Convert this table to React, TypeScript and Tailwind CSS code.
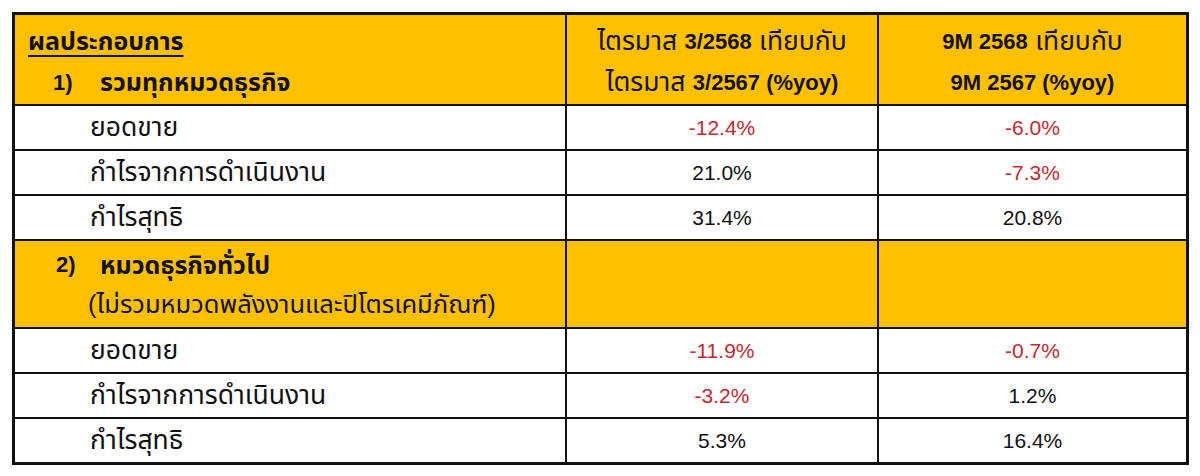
import React from 'react';

type Row = { label: string; q: string; m: string };

const isNeg = (v: string) => v.startsWith('-');

const section1: Row[] = [
  { label: 'ยอดขาย', q: '-12.4%', m: '-6.0%' },
  { label: 'กำไรจากการดำเนินงาน', q: '21.0%', m: '-7.3%' },
  { label: 'กำไรสุทธิ', q: '31.4%', m: '20.8%' },
];

const section2: Row[] = [
  { label: 'ยอดขาย', q: '-11.9%', m: '-0.7%' },
  { label: 'กำไรจากการดำเนินงาน', q: '-3.2%', m: '1.2%' },
  { label: 'กำไรสุทธิ', q: '5.3%', m: '16.4%' },
];

const font = { fontFamily: '"Liberation Sans", "Noto Sans Thai", "Noto Sans", sans-serif' };

// Thai runs are set larger than the Latin ones, as in the source sheet
const Th = ({ children }: { children: React.ReactNode }) => (
  <span className="text-[26.5px] font-normal">{children}</span>
);

const DataRows = ({ rows, last }: { rows: Row[]; last?: boolean }) => (
  <>
    {rows.map((r, i) => {
      const bottom = last && i === rows.length - 1 ? 'h-[43px]' : 'h-[45px] border-b-2';
      return (
        <React.Fragment key={r.label + i}>
          <div className={`${bottom} border-r-2 border-[#111] bg-white flex items-center pl-[75px] text-[26.5px] leading-none text-[#111]`}>
            {r.label}
          </div>
          <div
            className={`${bottom} border-r-2 border-[#111] bg-white flex items-center justify-center text-[21px] ${isNeg(r.q) ? 'text-[#c8282e]' : 'text-[#111]'}`}
          >
            {r.q}
          </div>
          <div
            className={`${bottom} border-[#111] bg-white flex items-center justify-center text-[21px] ${isNeg(r.m) ? 'text-[#c8282e]' : 'text-[#111]'}`}
          >
            {r.m}
          </div>
        </React.Fragment>
      );
    })}
  </>
);

export default function App() {
  return (
    <div className="w-[1200px] h-[476px] bg-white pt-[12px] pl-[12px]" style={font}>
      <div className="inline-grid grid-cols-[552px_312px_307px] border-[3px] border-[#111]">
        {/* header */}
        <div className="h-[91px] border-r-2 border-b-2 border-[#111] bg-[#ffc000] pt-[6px] text-[#111] font-bold">
          <div className="h-[41px] flex items-center pl-[13px] text-[25px] leading-none">
            <span className="underline underline-offset-[5px] decoration-2">ผลประกอบการ</span>
          </div>
          <div className="h-[41px] flex items-center leading-none">
            <span className="w-[85px] pl-[38px] text-[22px]">1)</span>
            <span className="text-[25px]">รวมทุกหมวดธุรกิจ</span>
          </div>
        </div>
        <div className="h-[91px] border-r-2 border-b-2 border-[#111] bg-[#ffc000] pt-[6px] text-[22px] font-bold text-[#111]">
          <div className="h-[41px] flex items-center justify-center leading-none whitespace-pre">
            <Th>ไตรมาส </Th>3/2568<Th> เทียบกับ</Th>
          </div>
          <div className="h-[41px] flex items-center justify-center leading-none whitespace-pre">
            <Th>ไตรมาส </Th>3/2567 (%yoy)
          </div>
        </div>
        <div className="h-[91px] border-b-2 border-[#111] bg-[#ffc000] pt-[6px] text-[22px] font-bold text-[#111]">
          <div className="h-[41px] flex items-center justify-center leading-none whitespace-pre">
            9M 2568<Th> เทียบกับ</Th>
          </div>
          <div className="h-[41px] flex items-center justify-center leading-none">9M 2567 (%yoy)</div>
        </div>

        <DataRows rows={section1} />

        {/* section 2 */}
        <div className="h-[88px] border-r-2 border-b-2 border-[#111] bg-[#ffc000] pt-[4px] text-[#111]">
          <div className="h-[40px] flex items-center font-bold leading-none">
            <span className="w-[85px] pl-[41px] text-[22px]">2)</span>
            <span className="text-[25px]">หมวดธุรกิจทั่วไป</span>
          </div>
          <div className="h-[40px] flex items-center pl-[73px] text-[25.5px] leading-none">
            (ไม่รวมหมวดพลังงานและปิโตรเคมีภัณฑ์)
          </div>
        </div>
        <div className="h-[88px] border-r-2 border-b-2 border-[#111] bg-[#ffc000]" />
        <div className="h-[88px] border-b-2 border-[#111] bg-[#ffc000]" />

        <DataRows rows={section2} last />
      </div>
    </div>
  );
}
